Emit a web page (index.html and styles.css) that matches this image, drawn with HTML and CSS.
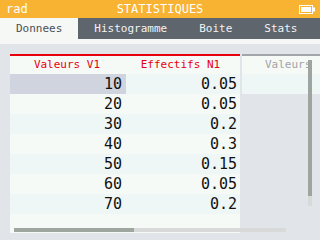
FILE: index.html
```html
<!DOCTYPE html>
<html lang="en">
<head>
  <meta charset="UTF-8">
  <title>Statistiques</title>
  <link rel="stylesheet" href="styles.css">
</head>
<body>
  <div class="topbar">
    <span>rad</span>
    <span class="title">STATISTIQUES</span>
    <svg class="battery" width="16" height="9" viewBox="0 0 16 9">
      <rect x="0.5" y="0.5" width="13" height="8" fill="none" stroke="#fff"/>
      <rect x="2" y="2" width="10" height="5" fill="#fff"/>
      <rect x="14" y="2.5" width="2" height="4" fill="#fff"/>
    </svg>
  </div>

  <div class="tabs">
    <div class="tab active">Donnees</div>
    <div class="tab">Histogramme</div>
    <div class="tab">Boite</div>
    <div class="tab">Stats</div>
  </div>
  <div class="strip"></div>

  <div class="main">
    <div class="sheet">
      <div class="row head">
        <div class="cell">Valeurs V1</div>
        <div class="cell">Effectifs N1</div>
      </div>
      <div class="row odd"><div class="cell selected">10</div><div class="cell">0.05</div></div>
      <div class="row"><div class="cell">20</div><div class="cell">0.05</div></div>
      <div class="row odd"><div class="cell">30</div><div class="cell">0.2</div></div>
      <div class="row"><div class="cell">40</div><div class="cell">0.3</div></div>
      <div class="row odd"><div class="cell">50</div><div class="cell">0.15</div></div>
      <div class="row"><div class="cell">60</div><div class="cell">0.05</div></div>
      <div class="row odd"><div class="cell">70</div><div class="cell">0.2</div></div>
    </div>

    <div class="next">
      <div class="row head"><div class="cell">Valeurs</div></div>
      <div class="row odd"><div class="cell"></div></div>
    </div>

    <div class="hscroll"><div class="thumb"></div></div>
    <div class="vscroll"><div class="thumb"></div></div>
  </div>
</body>
</html>
```

FILE: styles.css
```css
body {
  margin: 0;
  width: 320px;
  height: 240px;
  overflow: hidden;
  font-family: "DejaVu Sans Mono", monospace;
  background-color: #e1e4e9;
}
.topbar {
  height: 18px;
  background-color: #f8b332;
  color: #fff;
  font-size: 12px;
  display: flex;
  align-items: center;
  justify-content: space-between;
  padding: 0 5px 0 6px;
  position: relative;
}
.topbar .title {
  position: absolute;
  left: 0;
  right: 0;
  text-align: center;
}
.tabs {
  height: 21px;
  background-color: #5e656d;
  display: flex;
}
.tab {
  padding: 0 16px;
  color: #f2f2f2;
  font-size: 11px;
  line-height: 21px;
}
.tab.active {
  background-color: #f5f8f5;
  color: #4a4f57;
}
.strip {
  height: 5px;
  background-color: #f5f8f5;
}
.main {
  position: relative;
  display: flex;
  padding: 10px 0 0 10px;
}
.sheet {
  width: 230px;
  border-top: 2px solid #e8000c;
  background-color: #f6faf7;
  padding-bottom: 19px;
}
.next {
  flex: 1;
  margin-left: 2px;
  border-top: 2px solid #a2a6a9;
  align-self: flex-start;
}
.row {
  display: flex;
  height: 20px;
  background-color: #f6faf7;
}
.row.odd {
  background-color: #eef6f6;
}
.row.head {
  height: 18px;
  background-color: #f6faf7;
}
.cell {
  width: 114px;
  padding-right: 4px;
  text-align: right;
  font-size: 15px;
  line-height: 20px;
  color: #111;
}
.cell + .cell {
  width: 113px;
  padding-right: 3px;
}
.cell.selected {
  background-color: #d0d4df;
}
.head .cell {
  text-align: center;
  padding: 0;
  font-size: 11px;
  line-height: 18px;
  color: #e8000c;
}
.next .head .cell {
  color: #a0a3a6;
  text-align: left;
  padding-left: 23px;
  white-space: nowrap;
}
.hscroll {
  position: absolute;
  left: 14px;
  top: 184px;
  width: 272px;
  height: 4px;
  background-color: #d8d9d9;
}
.hscroll .thumb {
  width: 120px;
  height: 4px;
  background-color: #9fa59f;
}
.vscroll {
  position: absolute;
  left: 308px;
  top: 16px;
  width: 4px;
  height: 146px;
  background-color: #d8d9d9;
}
.vscroll .thumb {
  height: 136px;
  background-color: #a0a4a0;
}
```
